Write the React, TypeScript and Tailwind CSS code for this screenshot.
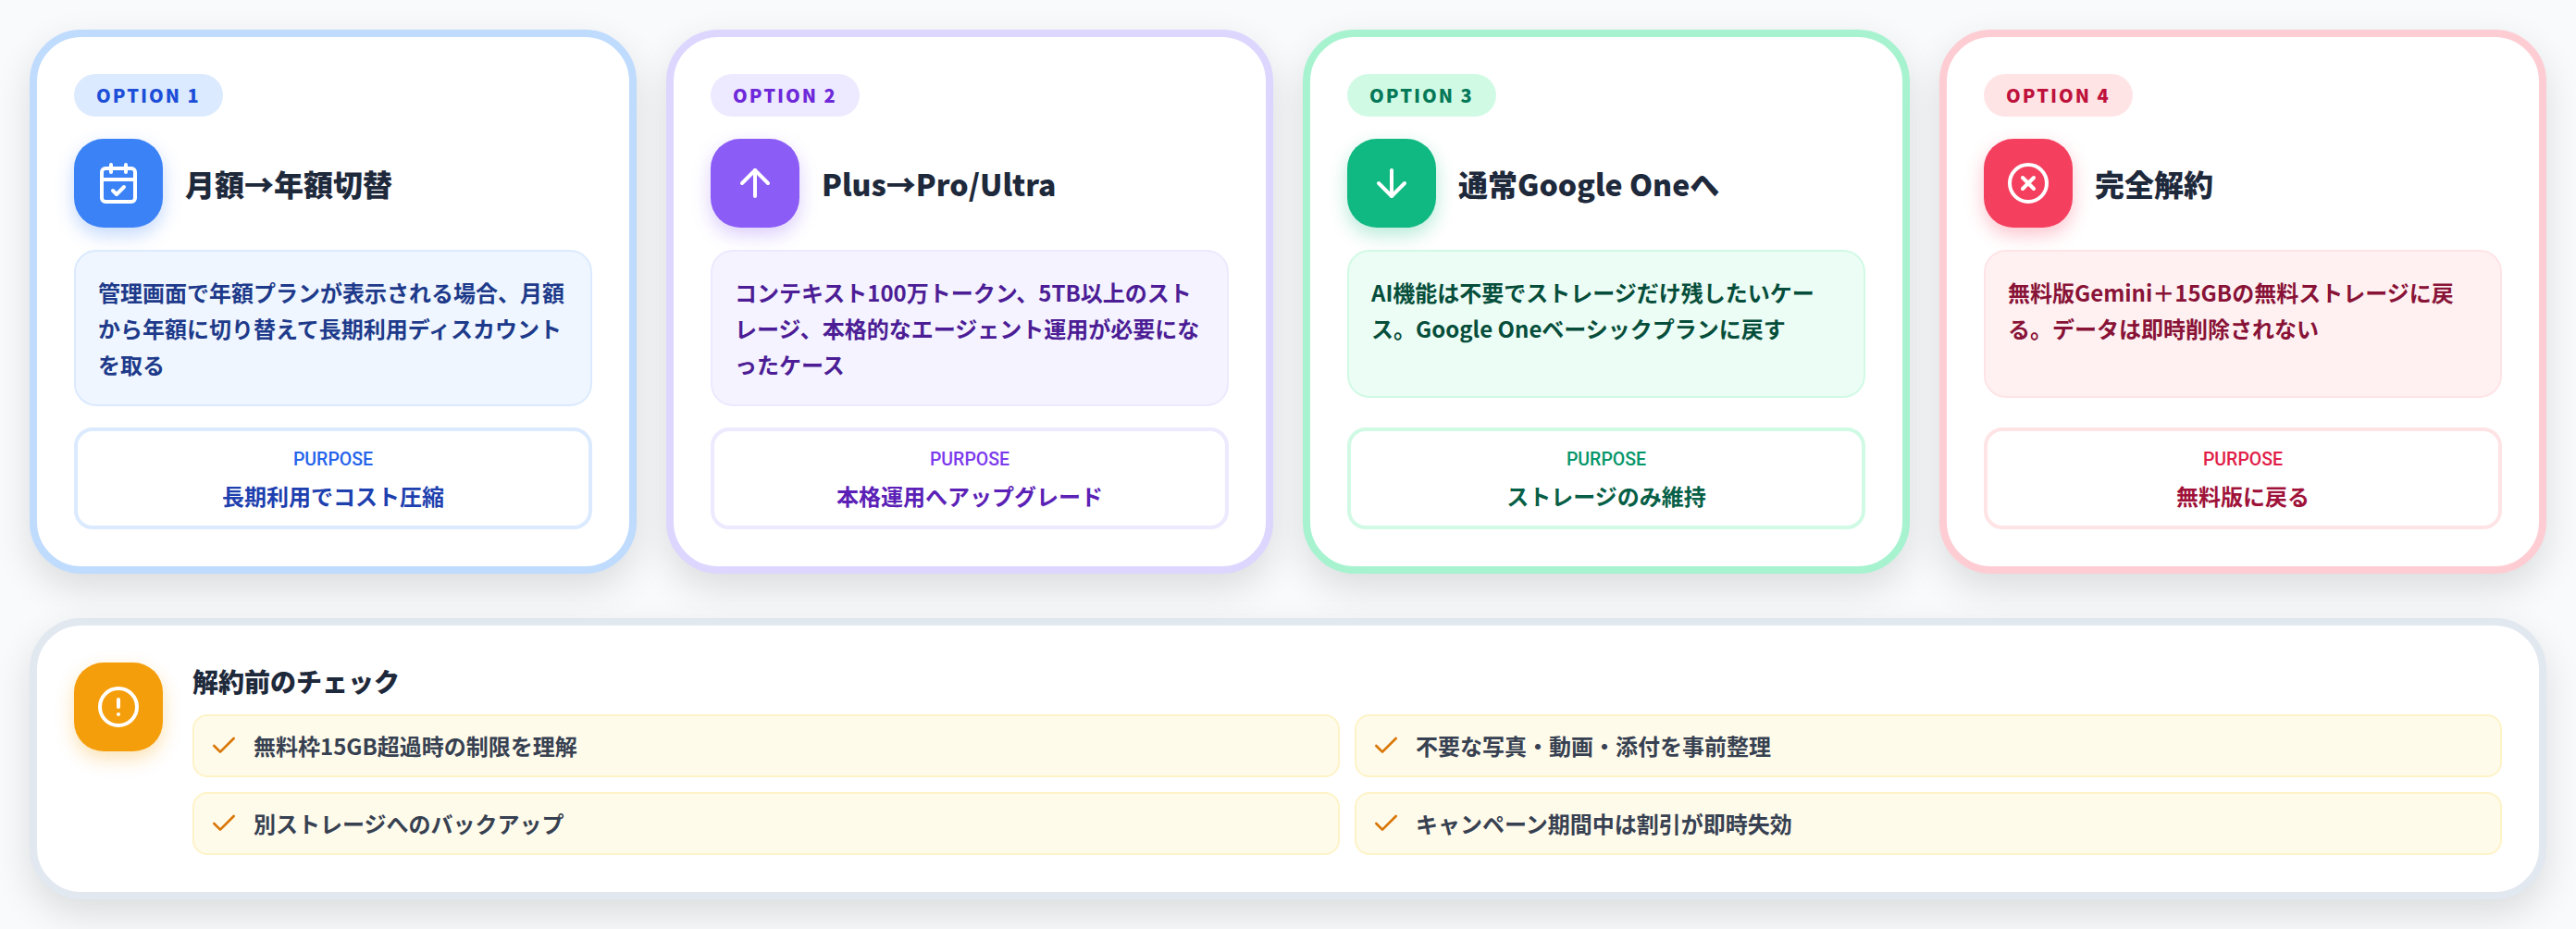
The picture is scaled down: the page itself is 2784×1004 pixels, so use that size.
import { ArrowDown, ArrowUp, CalendarCheck, Check, CircleAlert, CircleX } from "lucide-react";

const cards = [
  {
    option: "OPTION 1", title: "月額→年額切替", Icon: CalendarCheck,
    desc: "管理画面で年額プランが表示される場合、月額から年額に切り替えて長期利用ディスカウントを取る",
    purpose: "長期利用でコスト圧縮",
    border: "border-[#bfdbfe]", pill: "bg-[#dbeafe] text-[#1d4ed8]",
    icon: "bg-[#3b82f6] shadow-[0_8px_20px_rgba(59,130,246,0.3)]",
    box: "bg-[#eff6ff] border-[#dbeafe] text-[#1e3a8a]", pBorder: "border-[#dbeafe]",
    label: "text-[#2563eb]", value: "text-[#1e40af]",
  },
  {
    option: "OPTION 2", title: "Plus→Pro/Ultra", Icon: ArrowUp,
    desc: "コンテキスト100万トークン、5TB以上のストレージ、本格的なエージェント運用が必要になったケース",
    purpose: "本格運用へアップグレード",
    border: "border-[#ddd6fe]", pill: "bg-[#ede9fe] text-[#6d28d9]",
    icon: "bg-[#8b5cf6] shadow-[0_8px_20px_rgba(139,92,246,0.3)]",
    box: "bg-[#f5f3ff] border-[#ede9fe] text-[#4c1d95]", pBorder: "border-[#ede9fe]",
    label: "text-[#7c3aed]", value: "text-[#5b21b6]",
  },
  {
    option: "OPTION 3", title: "通常Google Oneへ", Icon: ArrowDown,
    desc: "AI機能は不要でストレージだけ残したいケース。Google Oneベーシックプランに戻す",
    purpose: "ストレージのみ維持",
    border: "border-[#a7f3d0]", pill: "bg-[#d1fae5] text-[#047857]",
    icon: "bg-[#10b981] shadow-[0_8px_20px_rgba(16,185,129,0.3)]",
    box: "bg-[#ecfdf5] border-[#d1fae5] text-[#064e3b]", pBorder: "border-[#d1fae5]",
    label: "text-[#059669]", value: "text-[#065f46]",
  },
  {
    option: "OPTION 4", title: "完全解約", Icon: CircleX,
    desc: "無料版Gemini＋15GBの無料ストレージに戻る。データは即時削除されない",
    purpose: "無料版に戻る",
    border: "border-[#fecdd3]", pill: "bg-[#ffe4e6] text-[#be123c]",
    icon: "bg-[#f43f5e] shadow-[0_8px_20px_rgba(244,63,94,0.3)]",
    box: "bg-[#fff1f2] border-[#ffe4e6] text-[#881337]", pBorder: "border-[#ffe4e6]",
    label: "text-[#e11d48]", value: "text-[#9f1239]",
  },
];

const checks = [
  "無料枠15GB超過時の制限を理解",
  "不要な写真・動画・添付を事前整理",
  "別ストレージへのバックアップ",
  "キャンペーン期間中は割引が即時失効",
];

export default function App() {
  return (
    <div className="h-[1004px] w-[2784px] overflow-hidden bg-[#f8fafc] p-8 font-['Noto_Sans_CJK_JP','Noto_Sans',sans-serif]">
      <div className="grid grid-cols-4 gap-8">
        {cards.map((c) => (
          <div
            key={c.option}
            className={`flex h-[588px] flex-col rounded-[56px] border-8 bg-white p-10 shadow-[0_16px_40px_rgba(0,0,0,0.12)] ${c.border}`}
          >
            <div className={`self-start rounded-full px-6 text-[20px] leading-[46px] font-black tracking-[0.1em] ${c.pill}`}>
              {c.option}
            </div>
            <div className="mt-6 flex items-center gap-6">
              <div className={`flex size-24 items-center justify-center rounded-[32px] text-white ${c.icon}`}>
                <c.Icon size={48} strokeWidth={2} />
              </div>
              <div className="text-[32px] leading-[48px] font-black text-[#1e293b]">{c.title}</div>
            </div>
            <div className={`mt-6 min-h-40 rounded-3xl border-2 p-6 text-2xl leading-[39px] font-semibold ${c.box}`}>
              {c.desc}
            </div>
            <div className={`mt-auto flex h-[110px] flex-col items-center justify-center rounded-[20px] border-4 bg-white ${c.pBorder}`}>
              <div className={`font-['Roboto',sans-serif] text-[19.5px] leading-[32px] font-medium ${c.label}`}>PURPOSE</div>
              <div className={`mt-[5px] text-2xl leading-[36px] font-bold ${c.value}`}>{c.purpose}</div>
            </div>
          </div>
        ))}
      </div>
      <div className="mt-12 flex h-[304px] gap-8 rounded-[56px] border-8 border-[#e2e8f0] bg-white p-10 shadow-[0_16px_40px_rgba(0,0,0,0.12)]">
        <div className="flex size-24 shrink-0 items-center justify-center rounded-[32px] bg-[#f59e0b] text-white shadow-[0_8px_20px_rgba(245,158,11,0.3)]">
          <CircleAlert size={48} strokeWidth={2} />
        </div>
        <div className="flex-1">
          <div className="mb-4 text-[28px] leading-10 font-black text-[#1e293b]">解約前のチェック</div>
          <div className="grid grid-cols-2 gap-4">
            {checks.map((t) => (
              <div key={t} className="flex h-[68px] items-center gap-4 rounded-2xl border-2 border-[#fef3c7] bg-[#fffbeb] px-4">
                <Check size={32} strokeWidth={2} className="shrink-0 text-[#d97706]" />
                <span className="text-2xl leading-9 font-semibold text-[#374151]">{t}</span>
              </div>
            ))}
          </div>
        </div>
      </div>
    </div>
  );
}
